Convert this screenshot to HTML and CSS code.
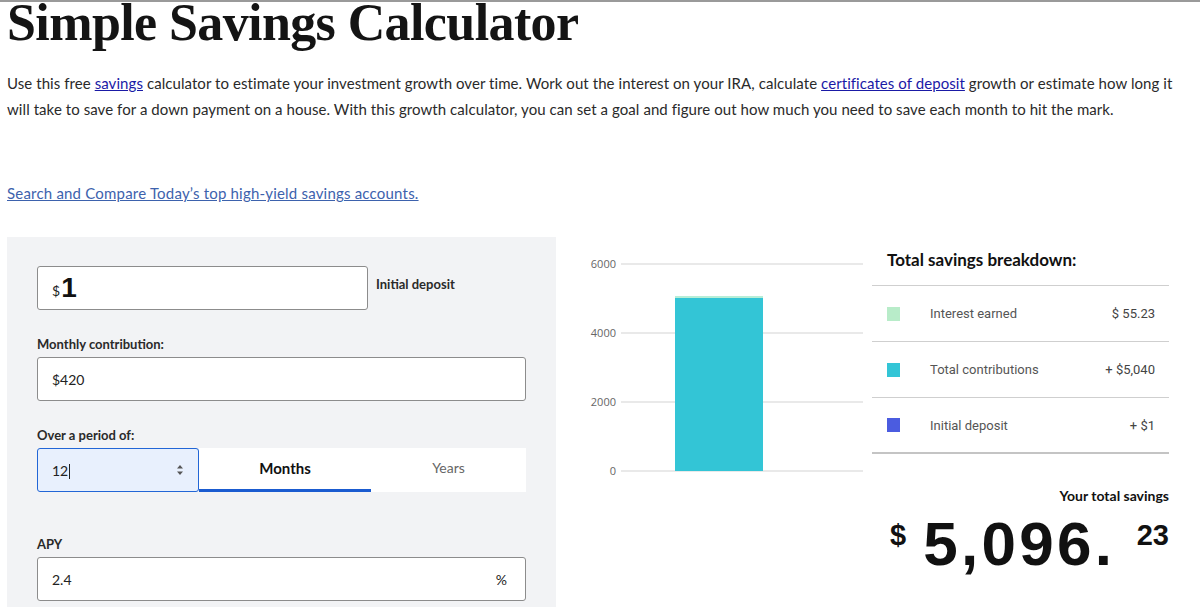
FILE: index.html
```html
<!DOCTYPE html>
<html lang="en">
<head>
<meta charset="utf-8">
<title>Simple Savings Calculator</title>
<link rel="stylesheet" href="styles.css">
</head>
<body>
<div class="page">
  <h1 class="title">Simple Savings Calculator</h1>
  <p class="intro">Use this free <a href="#">savings</a> calculator to estimate your investment growth over time. Work out the interest on your IRA, calculate <a href="#">certificates of deposit</a> growth or estimate how long it will take to save for a down payment on a house. With this growth calculator, you can set a goal and figure out how much you need to save each month to hit the mark.</p>
  <a class="compare" href="#">Search and Compare Today’s top high-yield savings accounts.</a>

  <div class="calc">
    <div class="form">
      <div class="row-initial">
        <div class="field field-initial"><span class="cur">$</span><span class="big">1</span></div>
        <span class="label-side">Initial deposit</span>
      </div>
      <div class="label">Monthly contribution:</div>
      <div class="field">$420</div>
      <div class="label">Over a period of:</div>
      <div class="period">
        <div class="field field-period"><span>12<span class="caret"></span></span>
          <svg class="spin" width="8" height="12" viewBox="0 0 8 12"><path d="M4 1 L7 4.5 H1 Z M4 11 L7 7.5 H1 Z" fill="#555"/></svg>
        </div>
        <div class="tabs">
          <div class="tab active">Months</div>
          <div class="tab">Years</div>
        </div>
      </div>
      <div class="label label-apy">APY</div>
      <div class="field field-apy"><span>2.4</span><span>%</span></div>
    </div>

    <div class="chart">
      <svg width="314" height="250" viewBox="0 0 314 250">
        <g stroke="#e2e2e2" stroke-width="1.5">
          <line x1="65" y1="27" x2="307" y2="27"/>
          <line x1="65" y1="96" x2="307" y2="96"/>
          <line x1="65" y1="165" x2="307" y2="165"/>
          <line x1="65" y1="234" x2="307" y2="234"/>
        </g>
        <g class="axis" text-anchor="end">
          <text x="60" y="31">6000</text>
          <text x="60" y="100">4000</text>
          <text x="60" y="169">2000</text>
          <text x="60" y="238">0</text>
        </g>
        <rect x="119" y="59" width="88" height="2" fill="#b7eed7"/>
        <rect x="119" y="61" width="88" height="173" fill="#33c5d6"/>
      </svg>
    </div>

    <div class="summary">
      <h2 class="sum-title">Total savings breakdown:</h2>
      <div class="sum-list">
        <div class="sum-row"><span class="sw sw-interest"></span><span class="sum-label">Interest earned</span><span class="sum-val">$ 55.23</span></div>
        <div class="sum-row"><span class="sw sw-contrib"></span><span class="sum-label">Total contributions</span><span class="sum-val">+ $5,040</span></div>
        <div class="sum-row"><span class="sw sw-initial"></span><span class="sum-label">Initial deposit</span><span class="sum-val">+ $1</span></div>
      </div>
      <div class="total-label">Your total savings</div>
      <div class="total">
        <span class="t-cur">$</span>
        <span class="t-main">5,096.</span>
        <span class="t-cents">23</span>
      </div>
    </div>
  </div>
</div>
</body>
</html>
```

FILE: styles.css
```css
* { box-sizing: border-box; }
html, body { margin: 0; padding: 0; background: #fff; }
body {
  border-top: 2px solid #9a9a9a;
  font-family: Lato, "Liberation Sans", sans-serif;
  color: #222;
  overflow: hidden;
  height: 607px;
}
.page { padding-left: 7px; }

.title {
  margin: 0;
  font-family: "Liberation Serif", serif;
  font-weight: 700;
  font-size: 52px;
  line-height: 41px;
  height: 41px;
  letter-spacing: -0.6px;
  color: #141414;
  padding-top: 0;
}

.intro {
  margin: 27px 0 0;
  width: 1168px;
  font-size: 15px;
  line-height: 26px;
  letter-spacing: 0.07px;
  color: #2a2a2a;
}
.intro a { color: #1a1aa6; text-decoration: underline; }

.compare {
  display: inline-block;
  margin-top: 61px;
  font-size: 15px;
  line-height: 20px;
  letter-spacing: 0.2px;
  color: #3d62ad;
  text-decoration: underline;
}

.calc {
  display: flex;
  margin-top: 34px;
}

.form {
  width: 549px;
  flex: none;
  background: #f2f3f5;
  padding: 29px 30px 20px;
  display: flex;
  flex-direction: column;
}
.row-initial { display: flex; align-items: flex-start; gap: 8px; }
.field {
  height: 44px;
  background: #fff;
  border: 1px solid #8c8c8c;
  border-radius: 3px;
  padding: 0 14px;
  display: flex;
  align-items: center;
  font-size: 14px;
  color: #222;
}
.field-initial { width: 331px; }
.cur { font-size: 14px; margin-top: 4px; }
.big { font-family: "Liberation Sans", sans-serif; font-weight: 700; font-size: 28px; color: #111; margin-left: 1px; }
.label-side { font-size: 13px; font-weight: 700; color: #2a2a2a; margin-top: 10px; }

.label {
  margin-top: 26px;
  margin-bottom: 5px;
  font-size: 13px;
  font-weight: 700;
  line-height: 16px;
  color: #2a2a2a;
}
.label-apy { margin-top: 44px; }

.period { display: flex; height: 44px; }
.field-period {
  width: 162px;
  flex: none;
  background: #e8f0fd;
  border: 1px solid #2266d6;
  justify-content: space-between;
}
.caret { display: inline-block; width: 1px; height: 15px; background: #222; vertical-align: -3px; margin-left: 1px; }
.tabs { flex: 1; display: flex; background: #fff; }
.tab {
  display: flex;
  align-items: center;
  justify-content: center;
  font-size: 14px;
  color: #666;
  border-bottom: 3px solid transparent;
  padding-bottom: 2px;
}
.tab:first-child { width: 172px; }
.tab:last-child { flex: 1; }
.tab.active { color: #111; font-weight: 700; font-size: 15px; border-bottom-color: #1a5bd0; }

.field-apy { justify-content: space-between; padding-right: 18px; }

.chart { width: 316px; flex: none; }
.chart svg { display: block; }
.axis { font-family: "Open Sans", sans-serif; font-size: 11px; fill: #666; }

.summary { width: 297px; flex: none; }
.sum-title {
  margin: 0;
  padding: 12px 0 0 15px;
  height: 48px;
  font-size: 17px;
  font-weight: 700;
  color: #111;
}
.sum-list { border-top: 1px solid #cfcfcf; }
.sum-row {
  height: 56px;
  display: flex;
  align-items: center;
  padding: 0 14px 0 15px;
  border-bottom: 1px solid #cfcfcf;
  font-family: Roboto, "Liberation Sans", sans-serif;
  font-size: 13px;
  color: #555;
}
.sum-row:last-child { border-bottom: 2px solid #c4c4c4; }
.sw { width: 13px; height: 14px; flex: none; margin-right: 30px; }
.sw-interest { background: #b8ecc9; }
.sw-contrib { background: #33c5d6; }
.sw-initial { background: #4b5ce0; }
.sum-label { flex: 1; }
.sum-val { color: #444; }

.total-label {
  margin-top: 33px;
  text-align: right;
  font-size: 14px;
  font-weight: 700;
  color: #111;
}
.total {
  display: flex;
  align-items: flex-start;
  padding-left: 18px;
  margin-top: 16px;
  color: #111;
  font-family: "Liberation Sans", sans-serif;
  font-weight: 700;
}
.t-cur { font-size: 29px; line-height: 30px; }
.t-main { font-size: 62px; line-height: 64px; margin-left: 17px; letter-spacing: 3.3px; margin-top: -8px; }
.t-cents { font-size: 29px; line-height: 30px; margin-left: auto; }
```
